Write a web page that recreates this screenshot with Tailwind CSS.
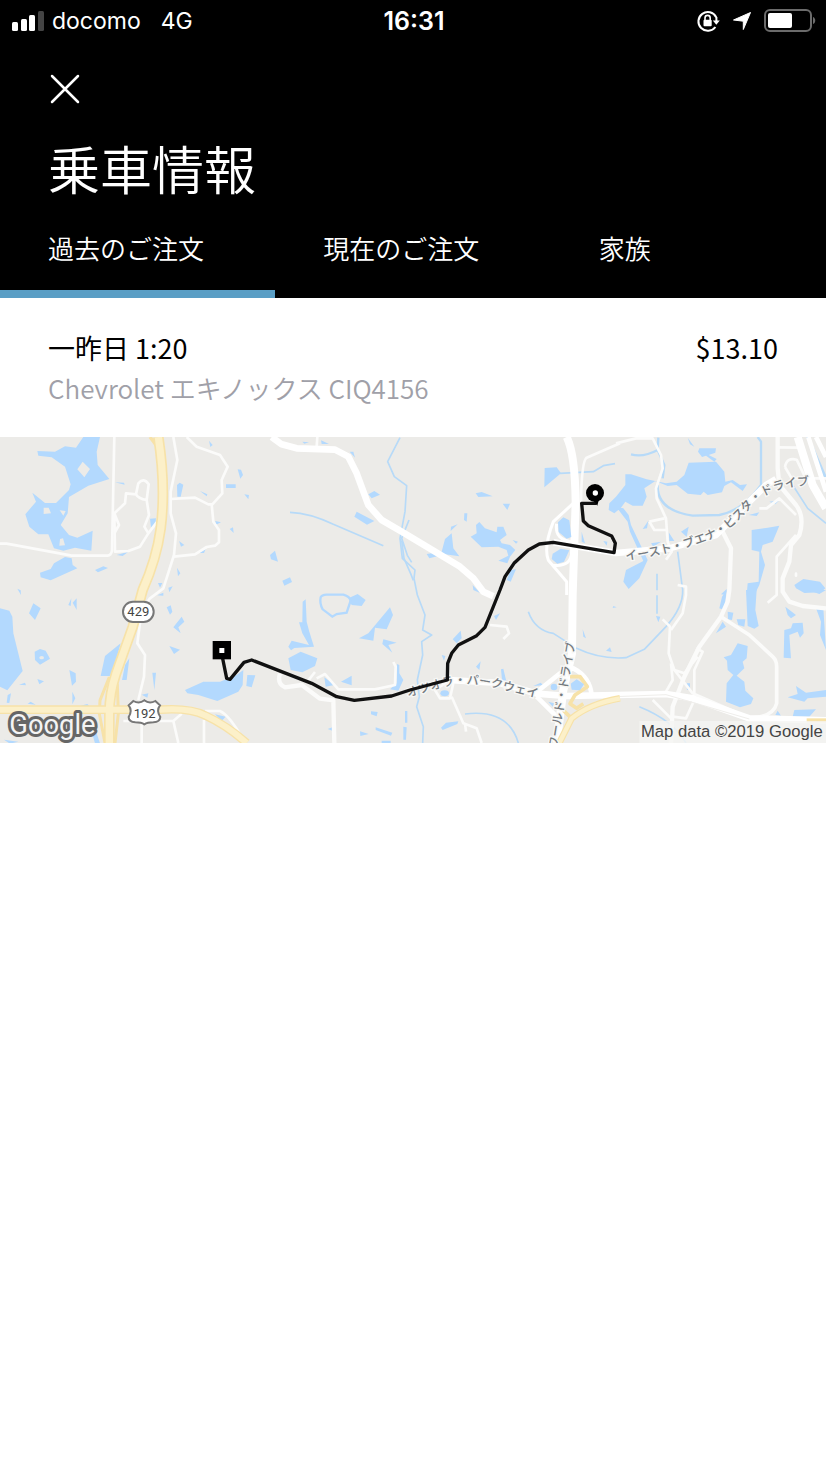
<!DOCTYPE html>
<html lang="ja">
<head>
  <meta charset="UTF-8" />
  <meta name="viewport" content="width=device-width, initial-scale=1.0"/>
  <title>乗車情報</title>
  <script src="https://cdn.jsdelivr.net/npm/@tailwindcss/browser@4"></script>
</head>
<body class="bg-white min-h-screen font-['Noto_Sans_CJK_JP',sans-serif]">
  <header class="bg-black text-white">
    <!-- status bar -->
    <div class="grid grid-cols-3 items-center h-[42px] pl-3 pr-[10px] font-['Inter',sans-serif] text-[23px] leading-10">
      <div class="flex items-center gap-2">
        <svg class="w-8 h-5" viewBox="0 0 32 20" fill="#fff">
          <rect x="0" y="11" width="6" height="9" rx="1.5"/>
          <rect x="9" y="8" width="6" height="12" rx="1.5"/>
          <rect x="17" y="4" width="6" height="16" rx="1.5"/>
          <rect x="26" y="0" width="6" height="20" rx="1.5" fill="#444"/>
        </svg>
        <span>docomo</span>
        <span class="ml-3">4G</span>
      </div>
      <time class="text-center text-[25px] font-semibold">16:31</time>
      <div class="flex items-center justify-end gap-3">
        <svg class="w-6 h-6" viewBox="0 0 24 24" fill="none" stroke="#fff" stroke-width="2">
          <path d="M20.2 8.2A9.4 9.4 0 1 0 19.4 18"/>
          <path d="M20.4 8v4"/>
          <path d="M16.8 11.4h7l-3.5 4.4z" fill="#fff" stroke="none"/>
          <path d="M9 11V9a2.6 2.6 0 0 1 5.2 0v2" stroke-width="1.6"/>
          <rect x="7.5" y="10.8" width="8.2" height="6.4" rx="1" fill="#fff" stroke="none"/>
        </svg>
        <svg class="w-5 h-5" viewBox="0 0 20 20" fill="#fff" stroke="#fff" stroke-linejoin="round">
          <path d="M18.500 1.500L11.300 18.500V10.200L1.500 9z"/>
        </svg>
        <svg class="w-[52px] h-6" viewBox="0 0 52 24">
          <rect x="1" y="1" width="46" height="21" rx="5" fill="none" stroke="#6b6b6b" stroke-width="2"/>
          <rect x="4" y="4" width="24" height="15" rx="2" fill="#fff"/>
          <path d="M49 8c3 1 3 6 0 7z" fill="#6b6b6b"/>
        </svg>
      </div>
    </div>

    <div class="px-12 pt-[30px]">
      <button type="button" aria-label="閉じる" class="block">
        <svg class="w-[34px] h-[34px]" viewBox="0 0 34 34" stroke="#fff" stroke-width="2.5" stroke-linecap="round">
          <path d="M4 4l26 26M30 4L4 30"/>
        </svg>
      </button>
      <h1 class="mt-[30px] text-[52px] leading-[64px] font-[350]">乗車情報</h1>
    </div>

    <nav class="mt-5 grid grid-cols-3 text-[26px] leading-10 font-[350]">
      <button type="button" class="h-[78px] pl-12 pb-[14px] text-left border-b-8 border-[#5a9ec5]">過去のご注文</button>
      <button type="button" class="h-[78px] pl-12 pb-[14px] text-left border-b-8 border-black">現在のご注文</button>
      <button type="button" class="h-[78px] pl-12 pb-[14px] text-left border-b-8 border-black">家族</button>
    </nav>
  </header>

  <main>
    <section class="px-12 pt-[30px] pb-[29px]">
      <div class="flex justify-between text-[27px] leading-10 text-black">
        <h2>一昨日 1:20</h2>
        <p>$13.10</p>
      </div>
      <p class="text-[26px] leading-10 font-[350] text-[#a0a0a8]">Chevrolet エキノックス CIQ4156</p>
    </section>

    <svg class="block w-full bg-[#ecebe8]" viewBox="0 0 2478 918" role="img" aria-label="乗車ルートの地図">
      <!-- lakes and ponds -->
      <g fill="#b3d9fe">
        <g transform="translate(0 -6)">
          <path d="M250 6H300L290 50 293 90 328 132 265 152 207 186 203 235 182 270 207 300 232 308 278 287 274 347 225 338 190 347 162 340 145 298H115L88 275 76 238 108 200 97 173 135 204H168L207 165 212 148 195 95 155 67 115 62 112 48 165 50 195 34 228 38z"/>
          <path d="M120 413L152 402 162 385 195 366 215 370 218 390 232 400 152 436 122 427zM285 405L310 394 324 399 294 412zM345 142L372 143 374 149zM350 360L385 350 368 363zM450 251L468 250 466 268 453 278zM531 150L539 143 550 149 542 185 532 185zM600 168L622 178 620 184zM537 318L553 330 543 335zM595 354L617 342 612 354zM531 398L541 415 534 424zM52 461L62 466 63 480zM474 444H487L480 458zM505 458L518 454 508 472z"/>
          <path d="M232 103L248 80 270 102 253 127zM131 218H146L153 235 131 237zM179 226L197 228 190 242zM180 312L189 310 195 331 178 332z" fill="#ecebe8"/>
        </g>
        <g transform="translate(0 459)">
          <path d="M0 55L28 62 37 80 40 130 68 243 22 301 0 290zM87 70L100 40 122 55 105 90zM205 45L214 25 212 48zM218 38L230 25V60zM104 185L120 177 137 182 150 206 120 224 105 210zM57 284L75 278 78 286zM112 267L132 274 118 283zM208 240L227 250 228 275 216 287zM23 315L33 310 28 339 20 338zM217 305L226 325 217 343zM83 341L92 335 107 344zM302 258L315 198 362 160 340 240 330 258zM375 225L388 205 380 270H366zM457 248H468L463 300zM425 314L445 310 442 323zM508 168L540 179 522 192zM520 112L545 80 553 95 535 112 542 130zM500 52L512 46 517 65 510 74zM275 425L290 430 300 460H285zM12 449L55 455 30 461zM240 348L262 342 270 350zM472 16L490 8V17z"/>
          <path d="M555 300L610 275 660 275 710 255 730 240 728 285 715 305 652 333 595 315 562 310z"/>
          <ellipse cx="125" cy="203" rx="7" ry="5" fill="#ecebe8"/>
        </g>
        <g transform="translate(615 -6)">
          <path d="M12 17L23 30 16 36zM98 103L108 104 114 120 106 131zM63 148H92V159H63zM118 178L132 180 130 193zM31 258L48 262 33 269zM74 282L84 277 86 294zM195 360L210 347 219 380 198 373zM232 437L255 427 261 441 238 452zM292 20L312 22 298 26zM348 16L372 27H350zM434 50L445 50 450 68zM490 178L508 168 525 179 500 190zM455 230L508 258 486 269 448 245z"/>
        </g>
        <g transform="translate(615 459)">
          <path d="M293 35L302 28 305 95 313 125 327 170 268 174 258 181 250 170 260 152 312 165 292 130 282 97H292zM250 205L287 185 337 205 330 228 292 247 257 240zM127 255L151 256 140 292 124 288zM430 25L458 12 482 30 470 48 440 45zM555 52L564 75 545 118 510 113 505 152 462 145 490 130zM535 148L575 158 550 165 562 188 532 162zM358 262L388 285 362 290zM408 275L440 257V286zM576 222L583 225V250L595 270 580 302 555 298 575 280zM30 373L62 380 50 393zM498 364L518 366 515 379 498 373zM600 363H607V398H600zM595 410L605 412 603 449H595zM512 412L562 428 558 437 512 420zM465 424L491 432 466 438zM530 452H557V459H530zM368 417L382 412V422z"/>
          <path d="M347 22Q350 15 365 14L415 14Q435 20 437 32L425 68 395 72 382 80 353 58Q343 40 347 22z" fill="none" stroke="#b3d9fe" stroke-width="7"/>
        </g>
        <g transform="translate(1230 -6)">
          <path d="M404 99L440 97 453 115 403 157zM197 175L215 171 248 184 205 186zM278 206L300 206 292 225zM163 235L172 235 170 260 162 255zM123 275L143 268 122 288zM105 312L125 295 130 340 148 364 105 358 58 370 50 357 95 350zM182 305L200 295 198 270 208 261 225 280 260 292 262 275 280 275 290 300 270 315 275 325 300 330 316 345 300 365 292 385 265 377 295 362 290 345 265 335 215 337zM308 315L324 320 318 326zM302 405L318 403 302 440 290 435zM188 450L210 474 190 465zM580 318L592 320 590 332zM515 290L525 325 515 320z"/>
        </g>
        <g transform="translate(1230 459)">
          <path d="M128 148L152 122 155 145 140 160zM252 78L270 70 258 90zM610 48L620 52 608 54zM518 118L528 145 520 140zM588 182L600 172 605 186zM198 230L212 214 208 240zM273 238L280 236 290 278 276 270zM95 195L106 198 102 212zM93 413L108 398 145 394 142 402 98 420zM370 288L392 278 400 286zM415 335L432 340 428 350z"/>
        </g>
        <g transform="translate(1848 -6)">
          <path d="M28 118L45 118 92 133 150 145 182 140 205 120 218 83 300 80 325 110 328 140 350 135 372 150 393 148 380 168 345 142 325 153 318 172 275 180 263 170 254 180 215 176 182 150 155 153 118 138 85 160 92 185 80 212H50L28 200 15 218-5 235-22 225-20 205 0 185 28 150zM0 215L22 220 38 240 45 270 95 375 70 430 38 462 22 440 30 405 82 378 42 290 35 260zM250 40H300L298 53 278 60 302 72 295 80 270 62 258 66 246 50zM215 8L235 35 222 28zM407 285L455 278 490 272 470 320 440 330 435 350 447 390 430 450 415 480H392L395 445 428 440 430 350 407 345zM535 450L562 432 612 440 628 460 615 472 565 474 540 460zM80 282L97 257 93 280zM195 290L218 275 212 305zM105 325L135 320 112 335zM158 292L175 318H160zM398 240L430 232 422 243zM460 200L490 196 478 208zM315 478L332 462 330 480z"/>
        </g>
        <g transform="translate(1848 459)">
          <path d="M390 0H422L418 60 428 108 415 116 395 108zM318 20L332 0 325 60 310 55zM300 130L320 95 330 110zM335 65L352 68 348 90 336 88zM362 88L388 88 385 110 367 105zM323 202L345 195 365 160 395 168 392 205 380 215 385 235 362 257 385 275 388 302 412 325 405 342 372 352 330 335 332 280 352 255 335 240 333 212zM508 50L540 75 525 85 515 75zM505 120L525 115 530 100 560 98 563 130 552 143 545 125 520 135 525 205 503 203zM600 55H622L630 180 612 135 615 95zM575 0H630L610 12zM515 322L545 312 540 288 570 308 630 300V320L575 325 565 335zM535 360L600 358 580 380 530 380zM478 375L485 362 495 377zM120 78L133 80 127 97zM212 280H222V300H213z"/>
        </g>
      </g>

      <!-- streams -->
      <g fill="none" stroke="#b7daf8" stroke-width="5" stroke-linejoin="round">
        <path d="M1200 2L1163 74 1183 119 1220 146 1215 224 1200 304 1207 364 1245 399 1242 424 1252 474 1275 534 1268 579 1295 594 1265 614 1268 654 1252 729 1258 779 1250 809 1270 869 1268 918"/>
        <path d="M1227 249L1205 304 1222 355 1235 376M1205 310L1212 364 1232 410 1240 430"/>
        <path d="M870 226Q930 228 1000 262L1150 326"/>
        <path d="M1585 524Q1605 580 1660 589L1730 634Q1800 668 1878 662L1933 637 1998 569Q2050 510 2048 459L2033 344"/>
        <path d="M1395 831Q1525 815 1555 918"/>
        <path d="M1680 109L1780 104 1810 86 1845 80"/>
        <path d="M1973 144Q1970 220 2078 236L2158 234Q2230 220 2283 144V14L2273 0M1893 52Q1930 62 1973 39L1975 2M1973 39L1993 84 1988 124" stroke-width="7"/>
        <path d="M2423 0L2478 125" stroke-width="9"/>
        <path d="M2378 144L2423 214 2478 259M1918 809Q2020 850 2058 918M1971 410V460M1971 475V530"/>
      </g>

      <!-- minor roads -->
      <g fill="none" stroke="#fbfbfa" stroke-width="8" stroke-linejoin="round">
        <path d="M343 0L336 340Q334 355 322 356H215L20 320H0"/>
        <path d="M345 344L343 229 375 199 378 169 408 172 415 139Q432 120 446 142L440 189 447 234 433 269 445 289 420 329 385 342zM408 172Q415 185 440 189M343 229L357 264 343 289M470 256L445 289"/>
        <path d="M520 0L532 69 512 164V229L528 289 522 354 490 454 450 484 425 519 412 619 435 654 432 719 415 789M425 829V918"/>
        <path d="M512 186L585 182 625 202 637 202 667 169 665 129 683 89 660 54 590 29 560 0M522 359L585 352 620 330 645 326 657 316V279L640 254 635 202"/>
        <path d="M370 852H520L545 830M520 852L535 918M612 849V918M615 822H660Q690 835 735 918"/>
        <path d="M952 0L950 30"/>
        <path d="M840 710Q830 740 855 751L905 744 960 785 1000 790 1003 918" stroke-width="13"/>
        <path d="M945 705L925 730M950 724L975 711 1015 757H1125L1185 744 1187 689 1180 675"/>
        <path d="M1470 564L1520 569 1527 589 1510 606"/>
        <path d="M1342 735L1305 759 1320 784H1350L1360 739M1355 779L1390 859 1430 874 1445 918M1395 860L1398 884"/>
        <path d="M1860 19L1760 62Q1745 72 1743 194M1848 19L1908 4H1958L1983 54 1988 94 1968 154 1970 184 1998 244 2003 314 2015 344 1998 368M1948 254L1993 244M1948 254L1963 279H1998"/>
        <path d="M2168 284L2193 334 2188 459 2183 494 2163 539 2098 629 2053 719 2018 809 2013 918" stroke-width="13"/>
        <path d="M2333 0V94L2338 144 2388 204Q2415 240 2398 294L2373 324 2368 374 2348 424V464L2368 494 2408 507 2478 514" stroke-width="13"/>
        <path d="M2388 294L2330 359V474L2303 497M2278 214H2300L2338 184 2388 234M2033 444L2058 449V474L2048 529 2013 579"/>
        <path d="M2328 31L2400 32M2355 90Q2360 60 2390 68L2420 130M2355 90L2375 124H2478"/>
        <path d="M1988 547L2010 569 2006 649 2023 699 2078 769 2228 834M1998 764L2018 729 2013 679M1958 789L2013 844M2088 634L2108 644 2083 699V779M2073 779L2218 834M2018 839L2058 844 2083 789M2023 699L2053 709 2093 659"/>
        <path d="M2163 539L2248 594 2318 659Q2330 670 2330 689V799Q2320 840 2248 844" stroke-width="11"/>
        <path d="M2388 410V416" stroke-linecap="round"/>
      </g>

      <!-- main roads -->
      <g fill="none" stroke="#fff" stroke-width="20" stroke-linejoin="round">
        <path d="M1725 194L1660 254Q1630 330 1645 370L1700 434V474M1670 260Q1662 310 1720 315M1660 385Q1710 390 1715 350" stroke-width="9"/>
        <path d="M1610 765L1680 709 1720 694Q1770 720 1775 775M1610 779L1670 839" stroke-width="14"/>
        <path d="M815 0L845 22 890 34 1005 38 1045 59 1070 109 1105 204 1145 249 1205 284 1230 299 1380 389 1420 424 1450 464 1480 478"/>
        <path d="M1700 0Q1725 50 1727 194L1718 474 1716 650 1690 760 1670 918" stroke-width="24"/>
        <path d="M1660 316L1848 348 2008 334 2148 294 2218 224 2298 144 2328 126"/>
        <path d="M1345 729L1500 738 1610 770 1700 777 1998 771 2078 784 2248 844 2478 850"/>
        <path d="M2393 0L2438 144 2478 214" stroke-width="24"/>
        <path d="M2425 0L2478 164M2448 0L2478 60" stroke-width="14"/>
      </g>
      <path d="M1848 779L1998 773 2248 846" fill="none" stroke="#efeeeb" stroke-width="3"/>

      <!-- interchange ponds -->
      <g fill="#b3d9fe">
        <path d="M1674 256L1690 241 1708 250 1714 300 1700 305 1676 285zM1658 350L1682 335 1708 340 1692 374 1672 380 1655 366z"/>
        <circle cx="1662" cy="750" r="10"/>
        <ellipse cx="1334" cy="769" rx="13" ry="9"/>
      </g>

      <!-- highways -->
      <g fill="none" stroke="#f7e2a8" stroke-linejoin="round">
        <path d="M328 720L300 790 298 830 315 918M352 740L355 830 345 918" stroke-width="9"/>
        <path d="M450 0L480 40" stroke-width="10"/>
        <path d="M1860 784Q1770 800 1715 844L1678 918" stroke-width="20"/>
        <path d="M1710 719H1740L1762 749 1725 774 1710 800 1730 814 1750 800M1715 844L1690 820" stroke-width="11"/>
        <path d="M2420 850H2478" stroke-width="12"/>
        <path d="M0 818H480Q570 812 615 835 680 865 740 918" stroke-width="26"/>
        <path d="M475 0Q498 150 482 275 470 365 428 459L398 570 348 710Q328 770 328 830V918" stroke-width="32"/>
        <g stroke="#fcf0c9">
          <path d="M1860 784Q1770 800 1715 844L1678 918" stroke-width="13"/>
          <path d="M0 818H480Q570 812 615 835 680 865 740 918" stroke-width="18"/>
          <path d="M475 0Q498 150 482 275 470 365 428 459L398 570 348 710Q328 770 328 830V918" stroke-width="22"/>
        </g>
      </g>
      <path d="M1712 740L1730 727 1752 742 1740 760 1715 758z" fill="#b3d9fe"/>

      <!-- street names -->
      <defs>
        <path id="buenaVista" d="M1878 370Q2010 353 2130 308 2200 275 2250 213 2310 140 2460 146"/>
        <path id="osceola" d="M1224 780L1340 748Q1400 732 1500 755L1640 790"/>
        <path id="world" d="M1671 936L1690 820 1732 580"/>
      </defs>
      <g class="font-['Noto_Sans_CJK_JP',sans-serif] font-medium" fill="#747a80" stroke="#f7f7f5" stroke-width="8" paint-order="stroke" font-size="36">
        <text><textPath href="#buenaVista">イースト・ブエナ・ビスタ・ドライブ</textPath></text>
        <text><textPath href="#osceola">オツオラ・パークウェイ</textPath></text>
        <text><textPath href="#world">ワールド・ドライブ</textPath></text>
      </g>

      <!-- route shields -->
      <g class="font-['Roboto',sans-serif]" fill="#fff" stroke="#777" stroke-width="6" font-size="39" text-anchor="middle">
        <rect x="369" y="494" width="92" height="61" rx="30"/>
        <path d="M400 792Q418 802 433 790 448 802 466 792L480 805Q468 820 481 840 480 855 460 856 442 856 433 862 424 856 406 856 386 855 386 840 398 820 386 805z"/>
        <g fill="#444" stroke="none">
          <text x="415" y="538">429</text>
          <text x="434" y="842">192</text>
        </g>
      </g>

      <!-- trip route -->
      <path d="M665 650L680 724 690 727 732 676 755 669 935 739 1010 779 1063 790 1175 777 1230 759 1342 729 1343 679 1355 649 1375 624 1430 596 1455 571 1500 459 1515 419 1542 379 1585 339 1618 321 1660 316 1842 347 1846 319 1835 297 1765 266 1750 252 1745 199H1790" fill="none" stroke="#111" stroke-width="10" stroke-linejoin="round"/>
      <rect x="638" y="612" width="55" height="55"/>
      <rect x="658" y="633" width="15" height="15" fill="#fff"/>
      <circle cx="1785" cy="168" r="27"/>
      <path d="M1780 190H1796L1792 206z"/>
      <circle cx="1786" cy="168" r="8" fill="#fff"/>

      <text class="font-['Roboto',sans-serif]" x="28" y="892" font-size="82" fill="#f4f4f4" stroke="#666" stroke-width="18" stroke-linejoin="round" paint-order="stroke">Google</text>
      <rect x="1918" y="852" width="560" height="66" fill="#f5f5f3" fill-opacity=".8"/>
      <text class="font-['Liberation_Sans',sans-serif]" x="2468" y="901" font-size="50" fill="#444" text-anchor="end">Map data ©2019 Google</text>
    </svg>
  </main>
</body>
</html>
